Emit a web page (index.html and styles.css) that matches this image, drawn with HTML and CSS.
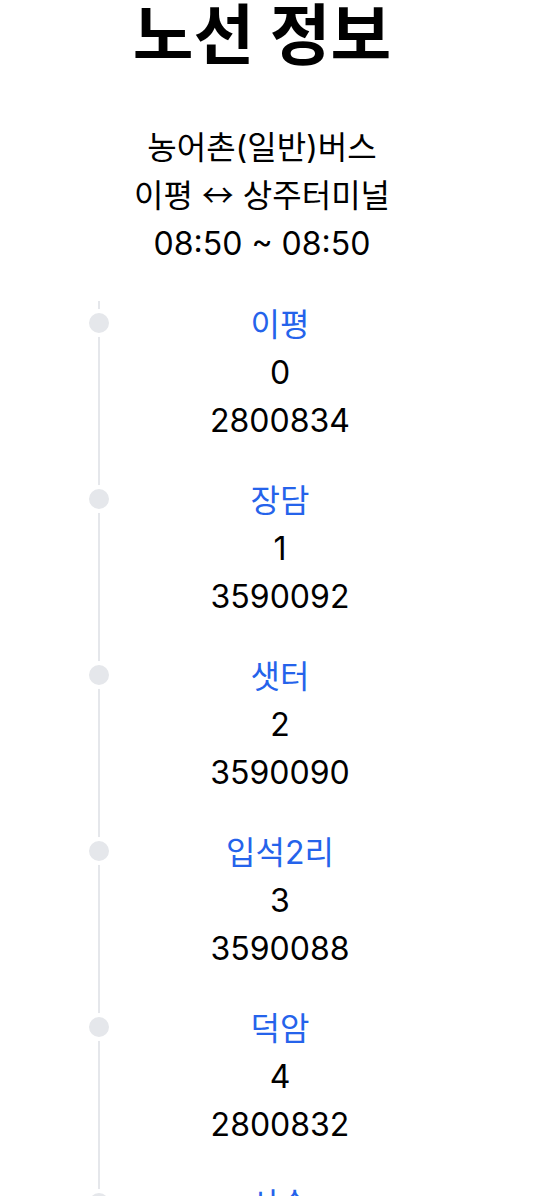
FILE: index.html
```html
<!DOCTYPE html>
<html lang="ko">
<head>
    <meta charset="UTF-8">
    <meta name="viewport" content="width=device-width, initial-scale=1.0">
    <title>노선 정보</title>
    <link rel="stylesheet" href="styles.css">
</head>
<body>
<div class="page">
    <h1 class="title">노선 정보</h1>

    <!-- 노선 요약 -->
    <div class="route-info">
        <p>농어촌(일반)버스</p>
        <p>이평 <span class="arrow">↔</span> 상주터미널</p>
        <p>08:50 ~ 08:50</p>
    </div>

    <!-- 정류장 목록 -->
    <ol class="timeline">
        <li class="stop">
            <span class="stop-dot"></span>
            <p class="stop-name">이평</p>
            <p>0</p>
            <p>2800834</p>
        </li>
        <li class="stop">
            <span class="stop-dot"></span>
            <p class="stop-name">장담</p>
            <p>1</p>
            <p>3590092</p>
        </li>
        <li class="stop">
            <span class="stop-dot"></span>
            <p class="stop-name">샛터</p>
            <p>2</p>
            <p>3590090</p>
        </li>
        <li class="stop">
            <span class="stop-dot"></span>
            <p class="stop-name">입석2리</p>
            <p>3</p>
            <p>3590088</p>
        </li>
        <li class="stop">
            <span class="stop-dot"></span>
            <p class="stop-name">덕암</p>
            <p>4</p>
            <p>2800832</p>
        </li>
        <li class="stop">
            <span class="stop-dot"></span>
            <p class="stop-name">사송</p>
            <p>5</p>
            <p>2800830</p>
        </li>
    </ol>
</div>
</body>
</html>
```

FILE: styles.css
```css
body {
    font-family: Inter, "Noto Sans CJK KR", sans-serif;
    font-size: 32px;
    line-height: 48px;
    color: #000;
    background-color: #fff;
    margin: 0;
}

p {
    margin: 0;
}

.page {
    padding: 0 32px 0 0;
}

.title {
    font-size: 66px;
    font-weight: 700;
    line-height: 66px;
    text-align: center;
    margin: 0;
    padding-top: 2px;
}

.route-info {
    margin-top: 56px;
    text-align: center;
}

.arrow {
    font-family: "Noto Sans CJK KR", sans-serif;
    line-height: 1;
}

.timeline {
    list-style: none;
    margin: 33px 0 0 98px;
    padding: 0 64px 0 0;
    border-left: 2px solid #e5e7eb;
}

.stop {
    position: relative;
    padding-bottom: 32px;
    text-align: center;
}

.stop-dot {
    position: absolute;
    left: -15px;
    top: 8px;
    width: 20px;
    height: 20px;
    border: 4px solid #fff;
    border-radius: 50%;
    background-color: #e5e7eb;
}

.stop-name {
    color: #2563eb;
}
```
